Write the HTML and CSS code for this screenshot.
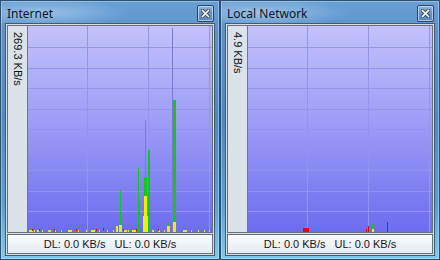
FILE: index.html
```html
<!DOCTYPE html>
<html lang="en">
<head>
  <meta charset="UTF-8" />
  <title>Network Meter</title>
  <link rel="stylesheet" href="styles.css">
</head>
<body>
  <div class="desk">

    <!-- Internet window -->
    <div class="window">
      <div class="titlebar">
        <span class="title">Internet</span>
        <button class="close">
          <svg width="9" height="9" viewBox="0 0 9 9">
            <path d="M1.5 1.5 L7.5 7.5 M7.5 1.5 L1.5 7.5" stroke="#3d4a58" stroke-width="3.4" stroke-linecap="square"/>
            <path d="M1.5 1.5 L7.5 7.5 M7.5 1.5 L1.5 7.5" stroke="#ffffff" stroke-width="1.6" stroke-linecap="square"/>
          </svg>
        </button>
      </div>
      <div class="client">
        <div class="chart">
          <div class="scale"><span>269.3 KB/s</span></div>
          <div class="graph">
            <svg width="184" height="206" viewBox="0 0 184 206">
              <g class="grid">
                <path d="M59.5 0V206M120.5 0V206M181.5 0V206"/>
                <path d="M0 21.5H184M0 42.5H184M0 62.5H184M0 83.5H184M0 103.5H184M0 124.5H184M0 144.5H184M0 165.5H184M0 185.5H184"/>
              </g>
              <g class="yellow">
                <rect x="1" y="204" width="4" height="2"/>
                <rect x="6" y="204" width="1" height="2"/>
                <rect x="9" y="204" width="2" height="2"/>
                <rect x="14" y="204" width="1" height="2"/>
                <rect x="20" y="204" width="3" height="2"/>
                <rect x="27" y="204" width="1" height="2"/>
                <rect x="33" y="204" width="1" height="2"/>
                <rect x="40" y="204" width="4" height="2"/>
                <rect x="50" y="204" width="1" height="2"/>
                <rect x="58" y="204" width="1" height="2"/>
                <rect x="63" y="204" width="4" height="2"/>
                <rect x="71" y="204" width="1" height="2"/>
                <rect x="79" y="204" width="1" height="2"/>
                <rect x="85" y="204" width="1" height="2"/>
                <rect x="88" y="200" width="2" height="6"/>
                <rect x="91" y="199" width="3" height="7"/>
                <rect x="96" y="204" width="3" height="2"/>
                <rect x="100" y="204" width="1" height="2"/>
                <rect x="104" y="204" width="4" height="2"/>
                <rect x="115" y="190" width="6" height="16"/>
                <rect x="116" y="170" width="3" height="36"/>
                <rect x="124" y="204" width="2" height="2"/>
                <rect x="130" y="204" width="2" height="2"/>
                <rect x="136" y="204" width="1" height="2"/>
                <rect x="139" y="200" width="3" height="6"/>
                <rect x="145" y="196" width="3" height="10"/>
                <rect x="155" y="204" width="4" height="2"/>
                <rect x="163" y="204" width="1" height="2"/>
                <rect x="170" y="204" width="1" height="2"/>
                <rect x="176" y="204" width="1" height="2"/>
                <rect x="181" y="204" width="1" height="2"/>
              </g>
              <g class="red">
                <rect x="4" y="203" width="1" height="2"/>
                <rect x="11" y="203" width="1" height="2"/>
                <rect x="26" y="203" width="1" height="2"/>
                <rect x="48" y="203" width="1" height="2"/>
                <rect x="68" y="203" width="1" height="2"/>
                <rect x="75" y="202" width="1" height="3"/>
                <rect x="95" y="203" width="1" height="2"/>
                <rect x="108" y="203" width="1" height="2"/>
                <rect x="130" y="203" width="1" height="2"/>
              </g>
              <g class="green">
                <rect x="2" y="202" width="1" height="2"/>
                <rect x="45" y="201" width="1" height="3"/>
                <rect x="87" y="192" width="1" height="14"/>
                <rect x="92" y="164" width="1" height="35"/>
                <rect x="110" y="141" width="1" height="65"/>
                <rect x="110" y="175" width="2" height="31"/>
                <rect x="116" y="151" width="3" height="19"/>
                <rect x="120" y="124" width="2" height="82"/>
                <rect x="139" y="197" width="2" height="3"/>
                <rect x="145" y="74" width="3" height="122"/>
              </g>
              <rect class="faint" x="117" y="94" width="1" height="57"/>
              <rect class="faint" x="144" y="2" width="1" height="204"/>
            </svg>
          </div>
        </div>
        <div class="status"><span>DL: 0.0 KB/s</span><span>UL: 0.0 KB/s</span></div>
      </div>
    </div>

    <!-- Local network window -->
    <div class="window">
      <div class="titlebar">
        <span class="title">Local Network</span>
        <button class="close">
          <svg width="9" height="9" viewBox="0 0 9 9">
            <path d="M1.5 1.5 L7.5 7.5 M7.5 1.5 L1.5 7.5" stroke="#3d4a58" stroke-width="3.4" stroke-linecap="square"/>
            <path d="M1.5 1.5 L7.5 7.5 M7.5 1.5 L1.5 7.5" stroke="#ffffff" stroke-width="1.6" stroke-linecap="square"/>
          </svg>
        </button>
      </div>
      <div class="client">
        <div class="chart">
          <div class="scale"><span>4.9 KB/s</span></div>
          <div class="graph">
            <svg width="184" height="206" viewBox="0 0 184 206">
              <g class="grid">
                <path d="M59.5 0V206M120.5 0V206M181.5 0V206"/>
                <path d="M0 21.5H184M0 42.5H184M0 62.5H184M0 83.5H184M0 103.5H184M0 124.5H184M0 144.5H184M0 165.5H184M0 185.5H184"/>
              </g>
              <g class="red">
                <rect x="55" y="202" width="6" height="4"/>
                <rect x="118" y="203" width="1" height="3"/>
                <rect x="120" y="200" width="1" height="6"/>
                <rect x="139" y="196" width="1" height="10"/>
              </g>
              <rect class="green-fill" x="124" y="198" width="2" height="5"/>
              <rect class="yellow-fill" x="124" y="203" width="2" height="3"/>
            </svg>
          </div>
        </div>
        <div class="status"><span>DL: 0.0 KB/s</span><span>UL: 0.0 KB/s</span></div>
      </div>
    </div>

  </div>
</body>
</html>
```

FILE: styles.css
```css
* {
  box-sizing: border-box;
}

html, body {
  margin: 0;
  padding: 0;
  width: 440px;
  height: 260px;
  overflow: hidden;
  background: #3d6f9e;
}

.desk {
  display: flex;
}

/* Aero style frame */
.window {
  width: 220px;
  height: 260px;
  display: flex;
  flex-direction: column;
  border: 1px solid #2e4e70;
  box-shadow: inset 0 0 0 1px rgba(200, 230, 255, 0.45);
  background: linear-gradient(to bottom, #6a9fd4 0%, #5a93cd 12%, #4c89c8 45%, #56a0d6 78%, #7ccbec 100%);
}

.titlebar {
  height: 22px;
  display: flex;
  justify-content: space-between;
  align-items: flex-start;
  padding: 4px 5px 0 6px;
  background: radial-gradient(ellipse 90px 14px at 40px 12px, rgba(220, 240, 255, 0.45), rgba(220, 240, 255, 0));
}

.title {
  font-family: "Noto Sans", "Liberation Sans", sans-serif;
  font-size: 12px;
  line-height: 17px;
  color: #101418;
}

.close {
  width: 17px;
  height: 17px;
  padding: 0;
  margin: 0;
  display: flex;
  align-items: center;
  justify-content: center;
  border: 1px solid #2c4766;
  border-radius: 2px;
  box-shadow: inset 0 0 0 1px rgba(220, 236, 255, 0.6);
  background: linear-gradient(to bottom, #8fb4dc, #6792c6 50%, #5b88c0);
}

.close svg {
  display: block;
}

/* Inner panel */
.client {
  flex: 1;
  margin: 0 4px 3px 4px;
  border: 1px solid #4c5965;
  padding: 1px;
  background: #d6dde4;
  display: flex;
  flex-direction: column;
  gap: 1px;
}

.chart {
  flex: 1;
  display: flex;
  border: 1px solid #66717c;
}

.scale {
  width: 20px;
  background: #dbe2e9;
  border-right: 1px solid #6f7a85;
  display: flex;
  justify-content: center;
  padding-top: 6px;
}

.scale span {
  writing-mode: vertical-rl;
  font-family: "Liberation Sans", Arial, sans-serif;
  font-size: 11px;
  color: #111;
}

.graph {
  flex: 1;
  background: linear-gradient(to bottom, #c2c2fb 0%, #9a9af6 50%, #6c6cf0 100%);
}

.graph svg {
  display: block;
}

.grid path {
  stroke: #9494ee;
  stroke-width: 1;
  fill: none;
}

.green rect, .green-fill { fill: #10c818; }
.yellow rect, .yellow-fill { fill: #f2ee00; }
.red rect { fill: #e80000; }
.faint { fill: #7a7ad6; }

.status {
  height: 20px;
  border: 1px solid #66717c;
  background: linear-gradient(to bottom, #fbfcfe, #e3eaf3);
  display: flex;
  justify-content: center;
  align-items: center;
  gap: 9px;
  font-family: "Liberation Sans", Arial, sans-serif;
  font-size: 11px;
  color: #151515;
}
```
